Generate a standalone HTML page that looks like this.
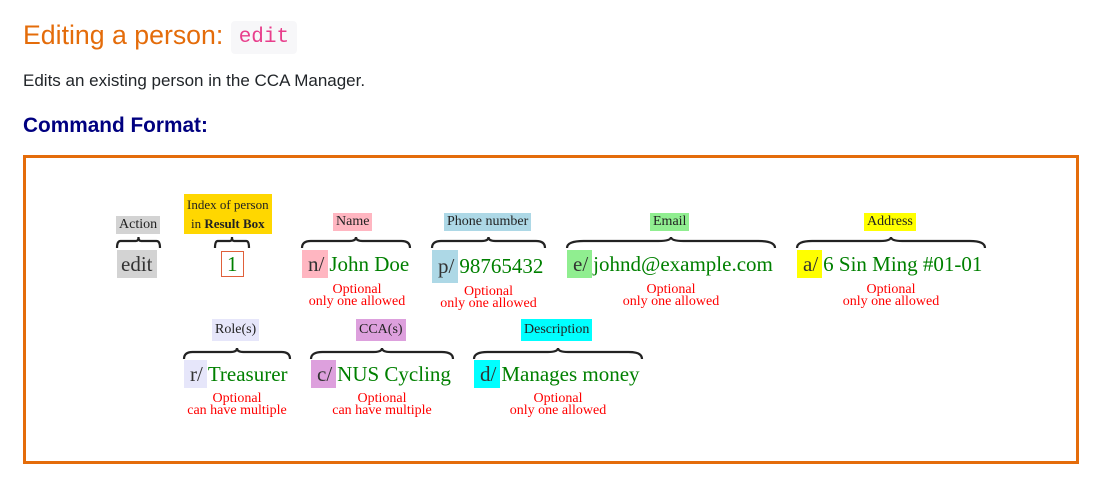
<!DOCTYPE html>
<html><head><meta charset="utf-8"><style>
body{margin:0;width:1099px;height:478px;background:#fff;position:relative;overflow:hidden;font-family:"Liberation Sans",sans-serif}
.a{position:absolute;white-space:nowrap}
.s{font-family:"Liberation Serif",serif}
.lb{font-size:14px;line-height:18px;color:#222;padding:0 3px}
.v{font-size:21px;line-height:28px;color:#008000}
.p{color:#333;display:inline-block;padding:0 4px 0 6px;margin-right:1px}
.o{font-size:14px;line-height:12px;color:red;text-align:center}
svg.b{position:absolute;overflow:visible}
</style></head><body>
<div class="a" style="left:23px;top:16px;font-size:26.7px;color:#e46c0a;line-height:38px">Editing a person: <span style="font-family:'Liberation Mono',monospace;font-size:21px;color:#e83e8c;background:#f7f7f9;border-radius:4px;padding:5px 8px;position:relative;top:-2px">edit</span></div>
<div class="a" style="left:23px;top:71px;font-size:17px;color:#212529">Edits an existing person in the CCA Manager.</div>
<div class="a" style="left:23px;top:114px;font-size:20.8px;color:#000080;font-weight:bold">Command Format:</div>
<div class="a" style="left:23px;top:155px;width:1050px;height:303px;border:3px solid #e46c0a"></div>

<svg width="0" height="0" style="position:absolute"><defs><path id="br" d="M0,11 Q0,4 8,4 L44,4 Q50,4 50,0 Q50,4 56,4 L92,4 Q100,4 100,11" fill="none" stroke="#222" stroke-width="2.2" vector-effect="non-scaling-stroke"/></defs></svg>

<div class="a s lb" style="left:116px;top:216px;background:#d3d3d3">Action</div>
<svg class="b" style="left:117px;top:237px" width="43" height="11" viewBox="0 0 100 11" preserveAspectRatio="none"><use href="#br"/></svg>
<div class="a s v" style="left:117px;top:250px;background:#d3d3d3;color:#333;padding:0 4px">edit</div>

<div class="a s lb" style="left:184px;top:194px;background:#ffd700;text-align:center;line-height:19px;padding:1px 3px;font-size:13px">Index of person<br>in <b>Result Box</b></div>
<svg class="b" style="left:215px;top:237px" width="34" height="11" viewBox="0 0 100 11" preserveAspectRatio="none"><use href="#br"/></svg>
<div class="a s v" style="left:221px;top:251px;border:1px solid #e0603a;padding:0 5px;line-height:24px">1</div>

<div class="a s lb" style="left:333px;top:213px;background:#ffb6c1">Name</div>
<svg class="b" style="left:302px;top:237px" width="108" height="11" viewBox="0 0 100 11" preserveAspectRatio="none"><use href="#br"/></svg>
<div class="a s v" style="left:302px;top:250px"><span class="p" style="background:#ffb6c1">n/</span>John Doe</div>
<div class="a s o" style="left:302px;top:284px;width:110px">Optional<br>only one allowed</div>

<div class="a s lb" style="left:444px;top:213px;background:#add8e6">Phone number</div>
<svg class="b" style="left:432px;top:237px" width="113" height="11" viewBox="0 0 100 11" preserveAspectRatio="none"><use href="#br"/></svg>
<div class="a s v" style="left:432px;top:250px"><span class="p" style="background:#add8e6;line-height:33px">p/</span>98765432</div>
<div class="a s o" style="left:432px;top:286px;width:113px">Optional<br>only one allowed</div>

<div class="a s lb" style="left:650px;top:213px;background:#90ee90">Email</div>
<svg class="b" style="left:567px;top:237px" width="208" height="11" viewBox="0 0 100 11" preserveAspectRatio="none"><use href="#br"/></svg>
<div class="a s v" style="left:567px;top:250px"><span class="p" style="background:#90ee90">e/</span>johnd@example.com</div>
<div class="a s o" style="left:567px;top:284px;width:208px">Optional<br>only one allowed</div>

<div class="a s lb" style="left:864px;top:213px;background:#ffff00">Address</div>
<svg class="b" style="left:797px;top:237px" width="188" height="11" viewBox="0 0 100 11" preserveAspectRatio="none"><use href="#br"/></svg>
<div class="a s v" style="left:797px;top:250px"><span class="p" style="background:#ffff00">a/</span>6 Sin Ming #01-01</div>
<div class="a s o" style="left:797px;top:284px;width:188px">Optional<br>only one allowed</div>

<div class="a s lb" style="left:212px;top:319px;background:#e6e6fa;line-height:22px">Role(s)</div>
<svg class="b" style="left:184px;top:348px" width="106" height="11" viewBox="0 0 100 11" preserveAspectRatio="none"><use href="#br"/></svg>
<div class="a s v" style="left:184px;top:360px"><span class="p" style="background:#e6e6fa">r/</span>Treasurer</div>
<div class="a s o" style="left:184px;top:393px;width:106px">Optional<br>can have multiple</div>

<div class="a s lb" style="left:356px;top:319px;background:#dda0dd;line-height:22px">CCA(s)</div>
<svg class="b" style="left:311px;top:348px" width="142" height="11" viewBox="0 0 100 11" preserveAspectRatio="none"><use href="#br"/></svg>
<div class="a s v" style="left:311px;top:360px"><span class="p" style="background:#dda0dd">c/</span>NUS Cycling</div>
<div class="a s o" style="left:311px;top:393px;width:142px">Optional<br>can have multiple</div>

<div class="a s lb" style="left:521px;top:319px;background:#00ffff;line-height:22px">Description</div>
<svg class="b" style="left:474px;top:348px" width="168" height="11" viewBox="0 0 100 11" preserveAspectRatio="none"><use href="#br"/></svg>
<div class="a s v" style="left:474px;top:360px"><span class="p" style="background:#00ffff">d/</span>Manages money</div>
<div class="a s o" style="left:474px;top:393px;width:168px">Optional<br>only one allowed</div>
</body></html>
